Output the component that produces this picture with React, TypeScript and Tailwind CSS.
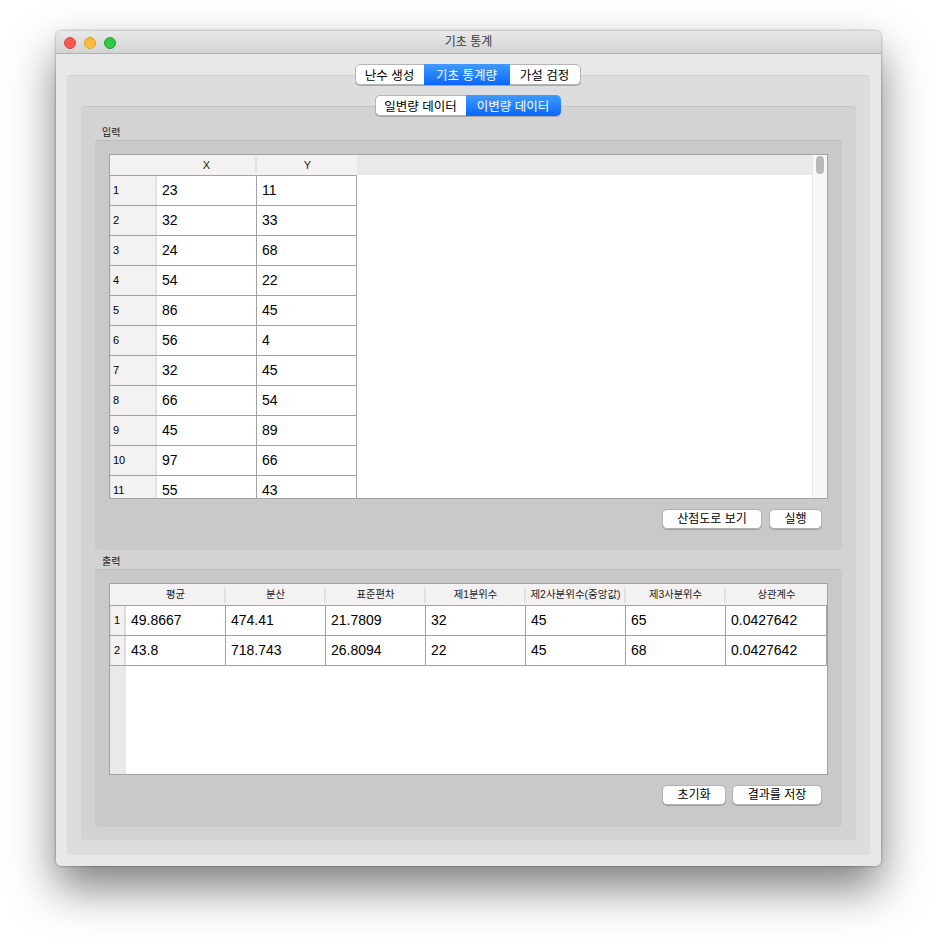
const FONT = "font-['Liberation_Sans','Noto_Sans_CJK_KR',sans-serif]";

const INPUT_ROWS = [
  [23, 11],
  [32, 33],
  [24, 68],
  [54, 22],
  [86, 45],
  [56, 4],
  [32, 45],
  [66, 54],
  [45, 89],
  [97, 66],
  [55, 43],
];

const OUTPUT_HEADERS = ["평균", "분산", "표준편차", "제1분위수", "제2사분위수(중앙값)", "제3사분위수", "상관계수"];

const OUTPUT_ROWS = [
  ["49.8667", "474.41", "21.7809", "32", "45", "65", "0.0427642"],
  ["43.8", "718.743", "26.8094", "22", "45", "68", "0.0427642"],
];

function Segmented({ items, active }: { items: { label: string; width: string }[]; active: number }) {
  return (
    <div className="relative z-10 flex h-[21px] rounded-[5px] border border-[#b4b4b4] bg-white shadow-[0_1px_0_#a8a8a8]">
      {items.map((item, i) => (
        <div
          key={item.label}
          className={
            item.width +
            " flex items-center justify-center pt-[4px] text-[12.5px] leading-none " +
            (i === active
              ? "bg-gradient-to-b from-[#3f9bfd] to-[#0a66fb] text-white " + (i === items.length - 1 ? "-my-px -mr-px rounded-r-[5px]" : "-my-px")
              : "text-black")
          }
        >
          {item.label}
        </div>
      ))}
    </div>
  );
}

function PushButton({ label, width }: { label: string; width: string }) {
  return (
    <button className={width + " h-[20px] rounded-[5px] border border-[#b2b2b2] bg-white pb-[1px] text-[12px] leading-none text-black shadow-[0_1px_0_#a0a0a0]"}>
      {label}
    </button>
  );
}

function HeaderLabel({ label, last, size }: { label: string; last?: boolean; size: string }) {
  return (
    <div className={"flex h-[16px] w-[100px] shrink-0 items-center justify-center pl-[1px] text-[#222] " + size + (last ? "" : " border-r-2 border-[#e2e0e1]")}>
      {label}
    </div>
  );
}

function InputTable() {
  return (
    <div className="relative h-[345px] overflow-hidden border border-[#a2a2a2] bg-white">
      <div className="flex h-[20px] items-start bg-[#e9e9e9]">
        <div className="flex h-[20px] w-[247px] items-center bg-[#f3f1f2]">
          <div className="w-[47px]" />
          <HeaderLabel label="X" size="text-[11px]" />
          <HeaderLabel label="Y" size="text-[11px]" last />
        </div>
      </div>
      <div className="w-[247px] border-t border-[#a2a2a2]">
        {INPUT_ROWS.map((row, i) => (
          <div key={i} className="flex h-[30px] border-b border-r border-[#a2a2a2] text-[14px] text-black">
            <div className="flex w-[47px] items-center border-l border-r-2 border-[#e2e0e1] bg-[#f3f1f2] pl-[2px] text-[11px]">
              {i + 1}
            </div>
            <div className="flex w-[100px] items-center border-r border-[#a2a2a2] pl-[5px]">{row[0]}</div>
            <div className="flex w-[99px] items-center pl-[5px]">{row[1]}</div>
          </div>
        ))}
      </div>
      {/* Scrollbar */}
      <div className="absolute inset-y-0 right-0 w-[15px] border-l border-[#e8e8e8] bg-[#f8f8f8]">
        <div className="ml-[3px] mt-[1px] h-[18px] w-[8px] rounded-[4px] bg-[#b9b9b9]" />
      </div>
    </div>
  );
}

function OutputTable() {
  return (
    <div className="flex h-[192px] flex-col border border-[#a2a2a2] bg-white">
      <div className="flex h-[21px] shrink-0 items-center bg-[#f3f1f2]">
        <div className="w-[16px]" />
        {OUTPUT_HEADERS.map((h, i) => (
          <HeaderLabel key={h} label={h} last={i === 6} size={i === 4 ? "text-[10.5px]" : "text-[10.3px]"} />
        ))}
      </div>
      <div className="min-h-0 flex-1 bg-[linear-gradient(to_right,#e9e9e9_16px,#ffffff_16px)]">
        <div className="w-[717px] border-t border-[#a2a2a2]">
          {OUTPUT_ROWS.map((row, i) => (
            <div key={i} className="flex h-[30px] border-b border-r border-[#a2a2a2] text-[14px] text-black">
              <div className="flex w-[16px] shrink-0 items-center border-l border-r-2 border-[#dddbdc] bg-[#f3f1f2] pl-[3px] text-[11px]">
                {i + 1}
              </div>
              {row.map((v, j) => (
                <div key={j} className={"flex w-[100px] items-center pl-[5px] " + (j < 6 ? "border-r border-[#a2a2a2]" : "")}>
                  {v}
                </div>
              ))}
            </div>
          ))}
        </div>
      </div>
    </div>
  );
}

function GroupBox({ title, height, children }: { title: string; height: string; children: React.ReactNode }) {
  return (
    <div>
      <div className="h-[15px] pl-[7px] pt-[2px] text-[10px] leading-[12px] text-[#222]">{title}</div>
      <div className={height + " rounded-[4px] border-t border-[#bdbdbd] bg-[#c9c9c9] px-[14px] pt-[13px]"}>{children}</div>
    </div>
  );
}

export default function App() {
  return (
    <div className={FONT + " h-[946px] w-[937px] overflow-hidden bg-white pl-[56px] pt-[31px]"}>
      <div className="h-[835px] w-[825px] rounded-[5px] bg-[#e8e8e8] shadow-[0_22px_45px_rgba(0,0,0,0.5),0_0_3px_rgba(0,0,0,0.4)]">
        {/* Title bar */}
        <div className="relative flex h-[23px] items-center justify-center rounded-t-[5px] border-b border-[#b1b1b1] bg-gradient-to-b from-[#e9e9e9] to-[#d3d3d3]">
          <div className="absolute left-[8px] top-[6px] flex gap-[8px]">
            <div className="h-[12px] w-[12px] rounded-full border border-[#e2463f] bg-[#fc5753]" />
            <div className="h-[12px] w-[12px] rounded-full border border-[#e1a116] bg-[#fdbc40]" />
            <div className="h-[12px] w-[12px] rounded-full border border-[#17a82b] bg-[#33c748]" />
          </div>
          <span className="text-[12px] text-[#3c3c3c]">기초 통계</span>
        </div>

        <div className="px-[11px] pt-[10px]">
          {/* Main tabs */}
          <div className="-mb-[10px] flex justify-center pr-[2px]">
            <Segmented
              active={1}
              items={[
                { label: "난수 생성", width: "w-[68px]" },
                { label: "기초 통계량", width: "w-[86px]" },
                { label: "가설 검정", width: "w-[70px]" },
              ]}
            />
          </div>
          <div className="h-[780px] rounded-[4px] border-t border-[#cfcfcf] bg-[#dddddd] px-[14px] pt-[19px]">
            {/* Sub tabs */}
            <div className="-mb-[10px] flex justify-center pr-[2px]">
              <Segmented
                active={1}
                items={[
                  { label: "일변량 데이터", width: "w-[90px]" },
                  { label: "이변량 데이터", width: "w-[95px]" },
                ]}
              />
            </div>
            <div className="h-[734px] rounded-[4px] border-t border-[#c4c4c4] bg-[#d3d3d3] px-[14px] pt-[18px]">
              <GroupBox title="입력" height="h-[410px]">
                <InputTable />
                <div className="mt-[10px] flex justify-end gap-[7px] pr-[6px]">
                  <PushButton label="산점도로 보기" width="w-[100px]" />
                  <PushButton label="실행" width="w-[53px]" />
                </div>
              </GroupBox>
              <div className="h-[4px]" />
              <GroupBox title="출력" height="h-[258px]">
                <OutputTable />
                <div className="mt-[10px] flex justify-end gap-[6px] pr-[6px]">
                  <PushButton label="초기화" width="w-[64px]" />
                  <PushButton label="결과를 저장" width="w-[90px]" />
                </div>
              </GroupBox>
            </div>
          </div>
        </div>
      </div>
    </div>
  );
}
